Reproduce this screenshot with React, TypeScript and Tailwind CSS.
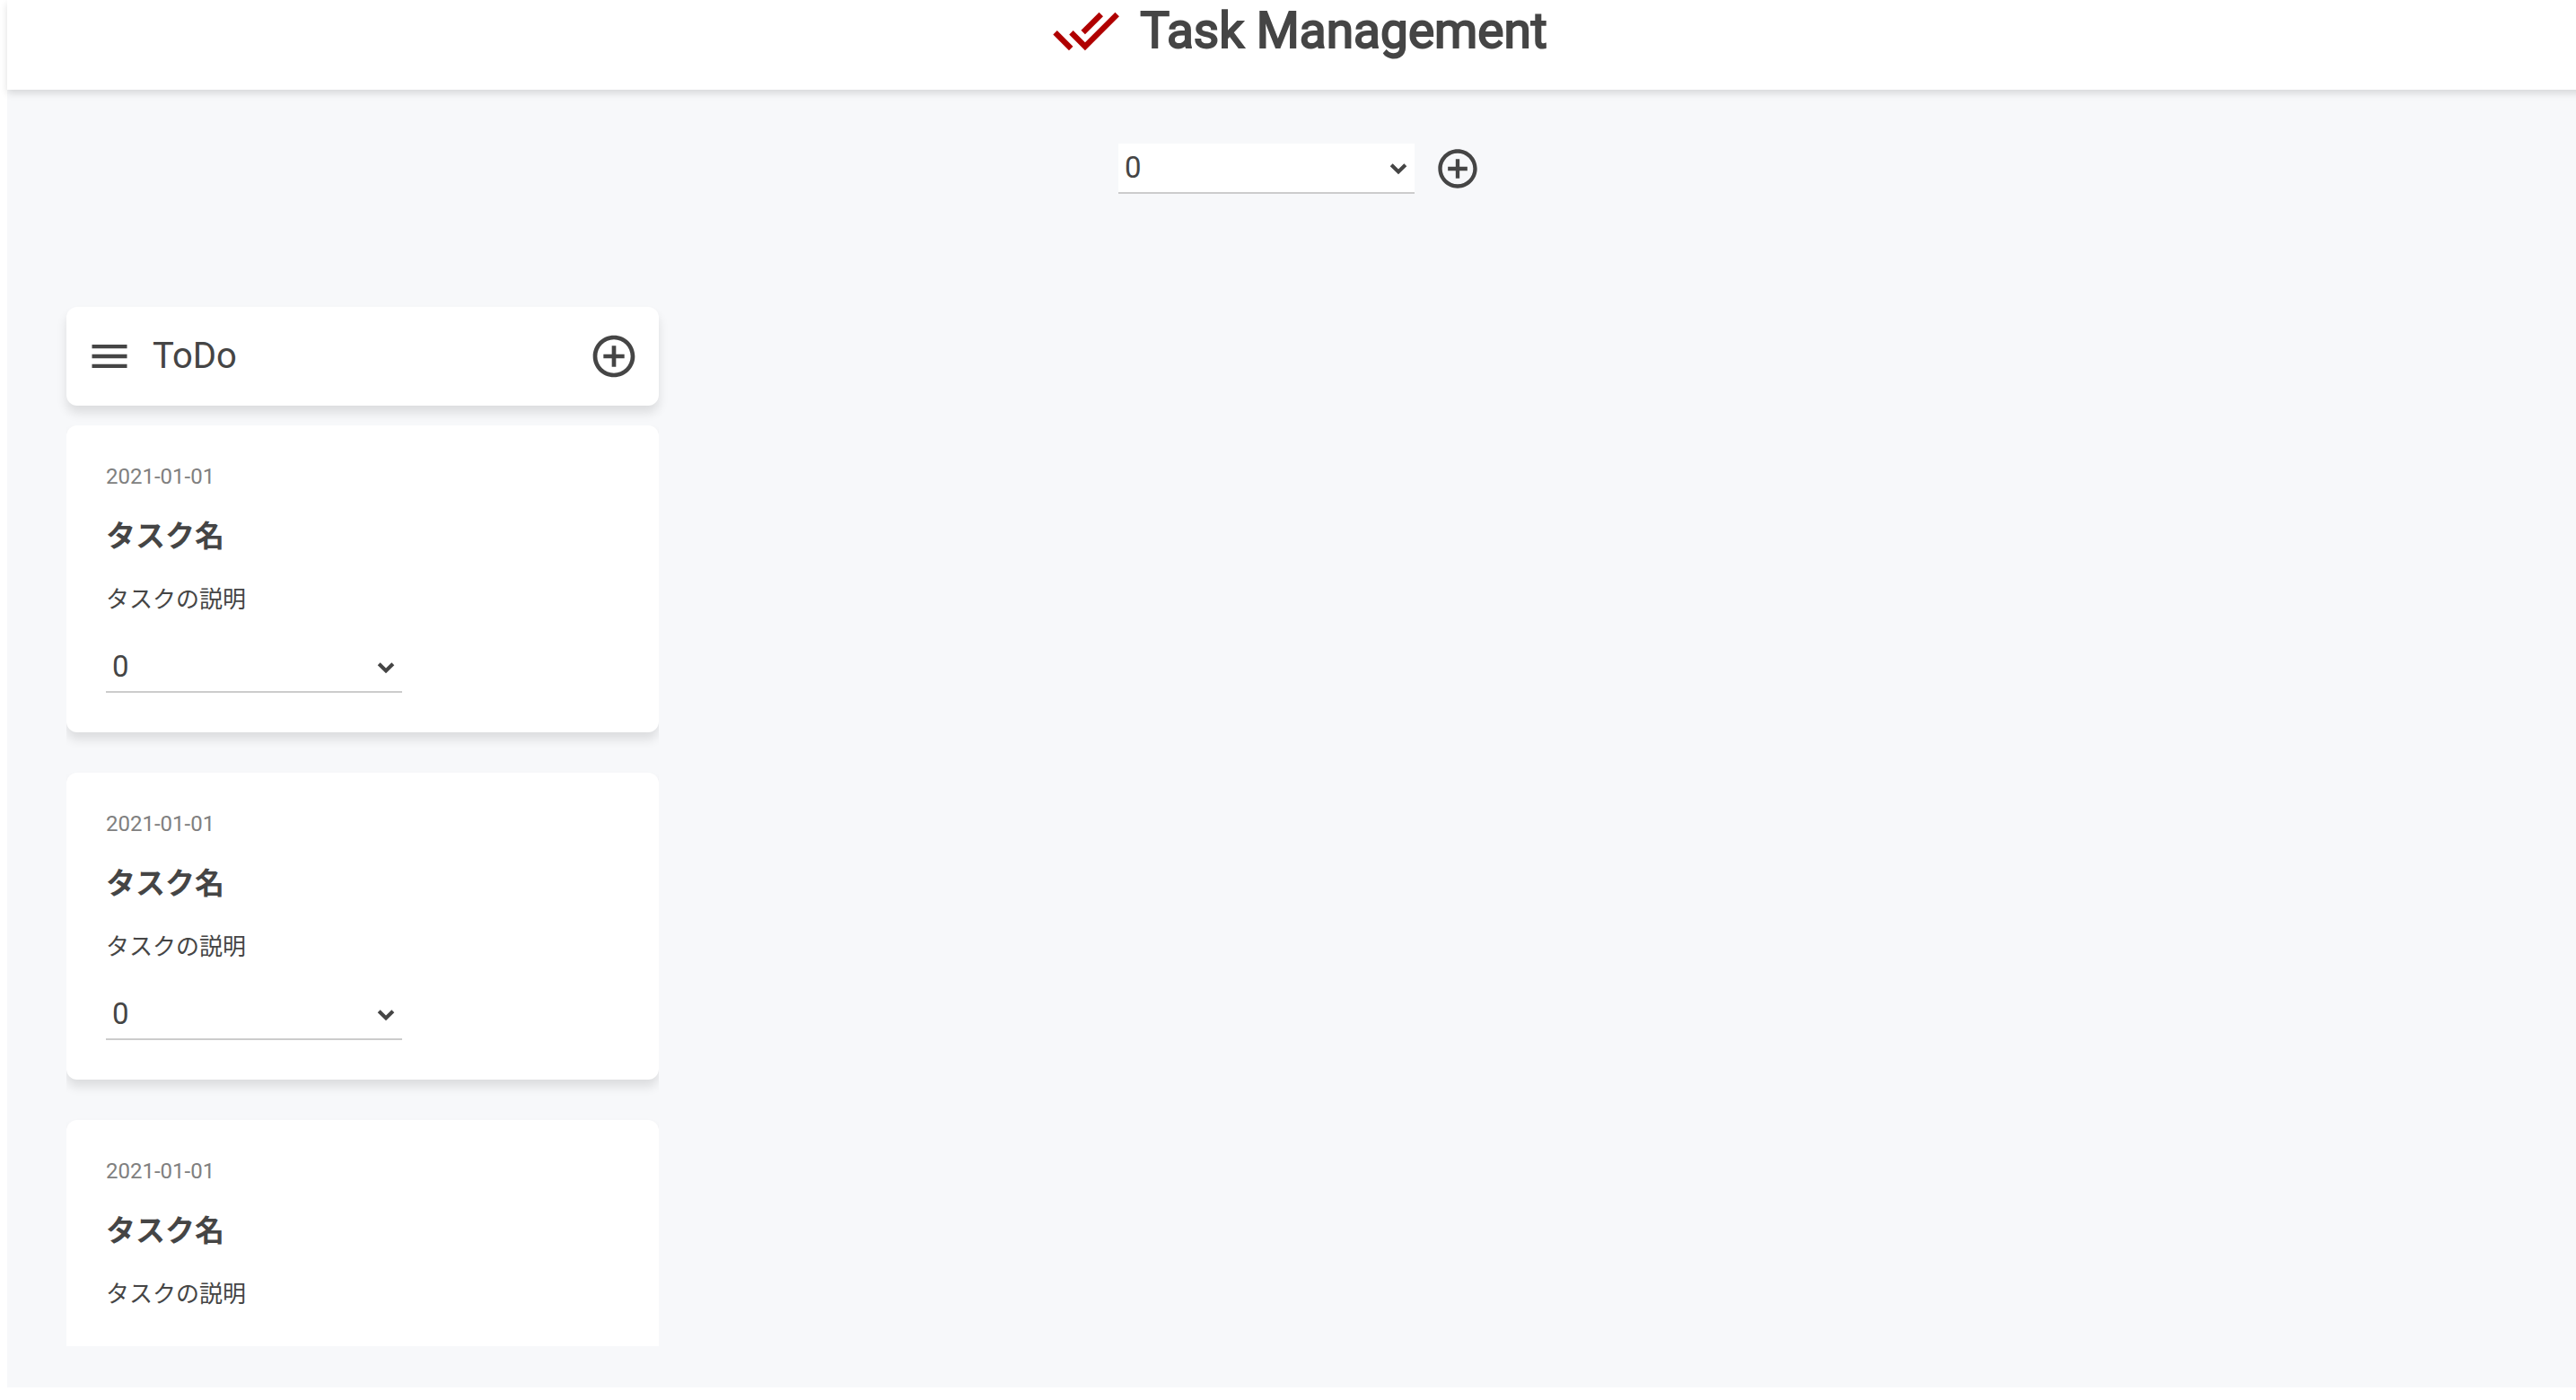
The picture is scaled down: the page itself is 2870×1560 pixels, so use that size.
import { useState } from "react";
import { MdAddCircleOutline, MdDoneAll, MdMenu } from "react-icons/md";

type Task = { id: number; date: string; name: string; description: string };

const tasks: Task[] = [1, 2, 3].map((id) => ({
  id,
  date: "2021-01-01",
  name: "タスク名",
  description: "タスクの説明",
}));

function NumberSelect({ label }: { label: string }) {
  const [value, setValue] = useState("0");
  return (
    <div className="relative w-[330px] shrink-0">
      <select
        aria-label={label}
        value={value}
        onChange={(e) => setValue(e.target.value)}
        className="block h-14 w-full appearance-none rounded-none border-b-2 border-[#cccccc] bg-white px-[7px] text-[33px] leading-[54px] outline-none"
      >
        <option>0</option>
        <option>1</option>
        <option>2</option>
      </select>
      <svg
        viewBox="0 0 20 14"
        className="pointer-events-none absolute top-[21px] right-2 h-3.5 w-5"
        fill="none"
        stroke="currentColor"
        strokeWidth="4.2"
        aria-hidden="true"
      >
        <path d="M2.2 2.8 10 10.4 17.8 2.8" />
      </svg>
    </div>
  );
}

function TaskCard({ task }: { task: Task }) {
  return (
    <li className="flex shrink-0 flex-col rounded-xl bg-white p-11 shadow-[0_8px_12px_rgba(0,0,0,0.11)]">
      <time className="text-2xl leading-[26px] text-[#808080]">{task.date}</time>
      <h3 className="mt-[29px] text-[33px] leading-[50px] font-bold">{task.name}</h3>
      <p className="mt-[25px] mb-[27px] text-[26px] leading-[41px]">{task.description}</p>
      <NumberSelect label="タスクの移動先" />
    </li>
  );
}

export default function App() {
  return (
    <div className="h-screen overflow-hidden bg-white pb-3.5 pl-2 font-['Roboto','Noto_Sans_CJK_JP',sans-serif] text-[#454545]">
      <div className="-mr-[18px] flex h-full flex-col bg-[#f7f8fa]">
        <header className="flex h-[100px] shrink-0 items-center justify-center gap-[22px] bg-white pb-8 shadow-[0_4px_8px_rgba(0,0,0,0.13)]">
          <MdDoneAll className="size-[76px] shrink-0 text-[#b00000]" />
          <h1 className="text-[55px] leading-[64px] [-webkit-text-stroke:2px]">Task Management</h1>
        </header>

        <div className="mt-[60px] flex shrink-0 items-center justify-center gap-[22px]">
          <NumberSelect label="追加するリスト" />
          <button type="button" aria-label="リストを追加">
            <MdAddCircleOutline className="size-[52px]" />
          </button>
        </div>

        <main className="mt-[126px] mb-[46px] ml-[66px] flex min-h-0 w-[660px] flex-1 flex-col">
          <div className="flex h-[110px] shrink-0 items-center rounded-xl bg-white px-[22px] shadow-[0_8px_12px_rgba(0,0,0,0.11)]">
            <button type="button" aria-label="メニュー">
              <MdMenu className="size-[52px]" />
            </button>
            <h2 className="ml-[22px] flex-1 text-[40px] leading-[48px]">ToDo</h2>
            <button type="button" aria-label="タスクを追加">
              <MdAddCircleOutline className="size-14" />
            </button>
          </div>
          <ul className="mt-[22px] flex min-h-0 flex-1 flex-col gap-[45px] overflow-y-auto [scrollbar-width:none]">
            {tasks.map((task) => (
              <TaskCard key={task.id} task={task} />
            ))}
          </ul>
        </main>
      </div>
    </div>
  );
}
